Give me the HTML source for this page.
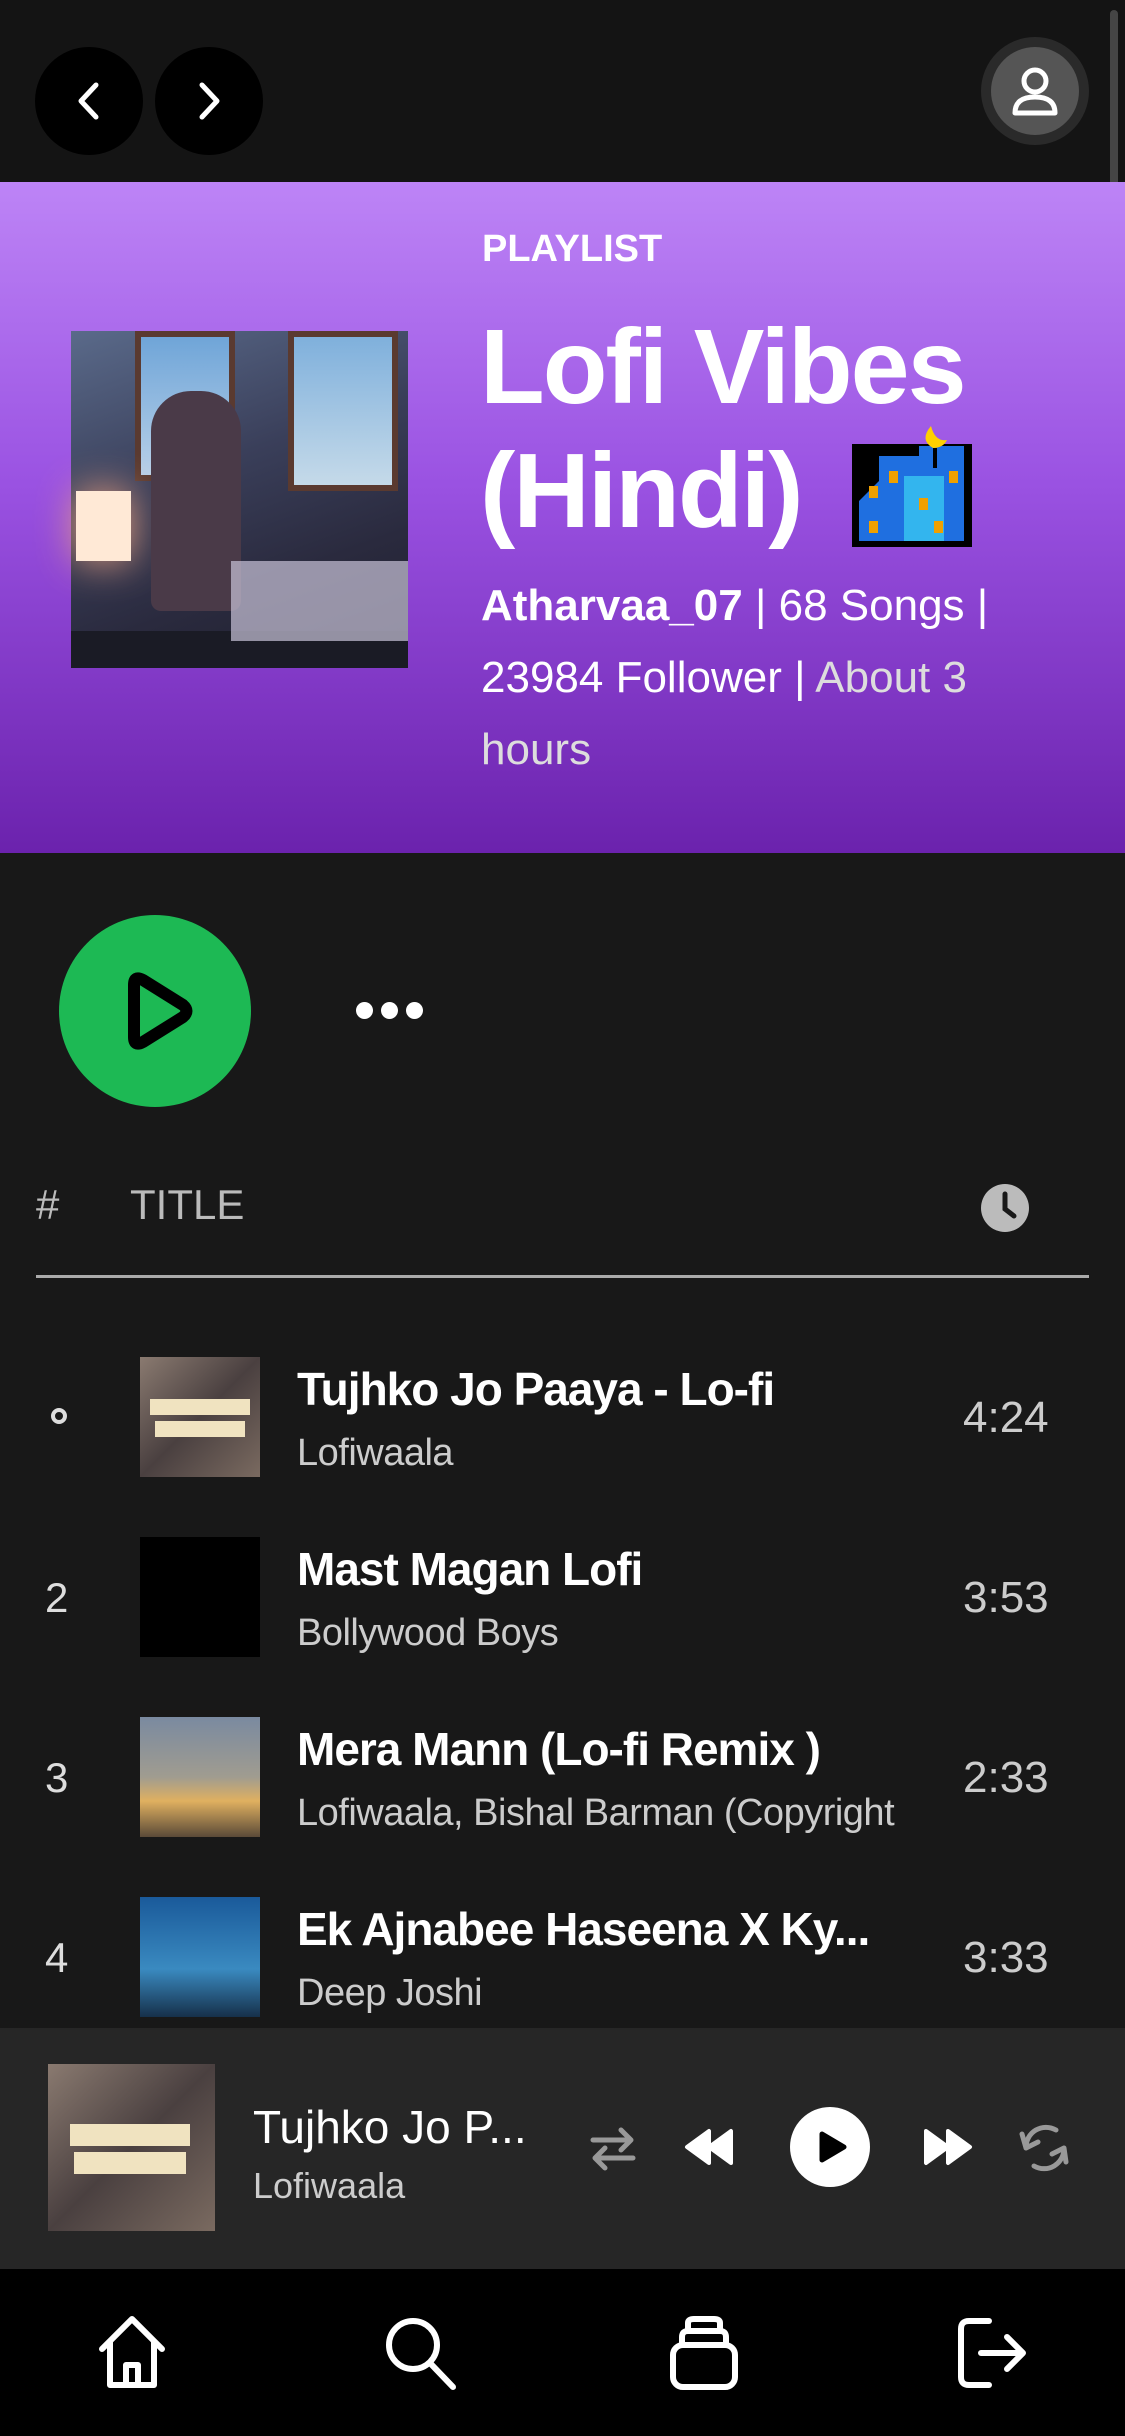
<!DOCTYPE html>
<html><head><meta charset="utf-8"><style>
*{margin:0;padding:0;box-sizing:border-box}
body{width:1125px;height:2436px;background:#181818;font-family:"Liberation Sans",sans-serif;color:#fff;position:relative;overflow:hidden}
.abs{position:absolute}
.top{left:0;top:0;width:1125px;height:182px;background:#141414}
.nb{width:108px;height:108px;border-radius:50%;background:#000;top:47px}
.hdr{left:0;top:182px;width:1125px;height:671px;background:linear-gradient(#bd84f6,#9a52e2 45%,#6b22ad)}
.t{white-space:nowrap}
.ttl{left:297px;font-size:46px;font-weight:bold;letter-spacing:-1px}
.art{left:297px;font-size:38px;color:#ccc;letter-spacing:-0.5px}
.dur{left:963px;font-size:44px;color:#ccc}
.th{left:140px;width:120px;height:120px}
</style></head><body>
<div class="abs top"></div>
<div class="abs nb" style="left:35px"></div>
<div class="abs nb" style="left:155px"></div>
<svg class="abs" style="left:35px;top:47px" width="108" height="108"><path d="M61 38 L46 54 L61 70" stroke="#fff" stroke-width="5" fill="none" stroke-linecap="round" stroke-linejoin="round"/></svg>
<svg class="abs" style="left:155px;top:47px" width="108" height="108"><path d="M47 38 L62 54 L47 70" stroke="#fff" stroke-width="5" fill="none" stroke-linecap="round" stroke-linejoin="round"/></svg>
<div class="abs" style="left:981px;top:37px;width:108px;height:108px;border-radius:50%;background:#2a2a2a"></div>
<div class="abs" style="left:991px;top:47px;width:88px;height:88px;border-radius:50%;background:#555"></div>
<svg class="abs" style="left:991px;top:47px" width="88" height="88"><circle cx="44" cy="34" r="11" stroke="#fff" stroke-width="5" fill="none"/><path d="M24 66 Q24 50 44 50 Q64 50 64 66 Z" stroke="#fff" stroke-width="5" fill="none" stroke-linejoin="round"/></svg>
<div class="abs" style="left:1110px;top:10px;width:8px;height:350px;background:#666;border-radius:4px;opacity:.6"></div>

<div class="abs hdr"></div>
<div class="abs" style="left:71px;top:331px;width:337px;height:337px;background:linear-gradient(160deg,#5a6a8a 0%,#3a3f5a 40%,#2a2a3e 70%,#1d1e2c 100%)">
 <div class="abs" style="left:64px;top:0;width:100px;height:150px;background:linear-gradient(#6fa5d8,#b8d0e8);border:6px solid #5a3a30"></div>
 <div class="abs" style="left:217px;top:0;width:110px;height:160px;background:linear-gradient(#7fb0dc,#c5dae9);border:6px solid #5a3a30"></div>
 <div class="abs" style="left:5px;top:160px;width:55px;height:70px;background:#ffe9d6;box-shadow:0 0 40px #e8a080"></div>
 <div class="abs" style="left:0;top:300px;width:337px;height:37px;background:#1a1b25"></div>
 <div class="abs" style="left:80px;top:60px;width:90px;height:220px;background:#4a3a48;border-radius:40px 40px 10px 10px"></div>
 <div class="abs" style="left:160px;top:230px;width:177px;height:80px;background:#c9c3d8;opacity:.7"></div>
</div>
<div class="abs t" style="left:482px;top:228px;font-size:38px;font-weight:bold">PLAYLIST</div>
<div class="abs" style="left:480px;top:305px;font-size:106px;font-weight:bold;line-height:124px;letter-spacing:-2px">Lofi Vibes<br>(Hindi)</div>
<svg class="abs" style="left:849px;top:426px" width="126" height="124"><rect x="3" y="18" width="120" height="103" fill="#000"/><path d="M10 115 V75 L30 55 V30 H70 V20 H115 V115 Z" fill="#1f6fe0"/><rect x="55" y="50" width="40" height="65" fill="#33b5ee"/><g fill="#f0a000"><rect x="20" y="60" width="9" height="12"/><rect x="40" y="45" width="9" height="12"/><rect x="70" y="72" width="9" height="12"/><rect x="100" y="45" width="9" height="12"/><rect x="20" y="95" width="9" height="12"/><rect x="85" y="95" width="9" height="12"/></g><path d="M82 0 Q70 14 84 22 Q94 22 98 14 Q86 16 82 0Z" fill="#ffd000"/><rect x="84" y="22" width="4" height="20" fill="#000"/></svg>
<div class="abs t" style="left:481px;top:570px;font-size:44px;line-height:72px"><b>Atharvaa_07</b> | 68 Songs |<br>23984 Follower | <span style="color:#ddd">About 3</span><br><span style="color:#ddd">hours</span></div>

<div class="abs" style="left:59px;top:915px;width:192px;height:192px;border-radius:50%;background:#1db954"></div>
<svg class="abs" style="left:59px;top:915px" width="192" height="192"><path d="M75 70 L75 122 Q75 132 84 127 L124 102 Q131 96 124 90 L84 65 Q75 60 75 70Z" fill="none" stroke="#000" stroke-width="12" stroke-linejoin="round"/></svg>
<div class="abs" style="left:356px;top:1002px;width:17px;height:17px;border-radius:50%;background:#fff"></div>
<div class="abs" style="left:381px;top:1002px;width:17px;height:17px;border-radius:50%;background:#fff"></div>
<div class="abs" style="left:406px;top:1002px;width:17px;height:17px;border-radius:50%;background:#fff"></div>

<div class="abs t" style="left:36px;top:1181px;font-size:42px;color:#bbb">#</div>
<div class="abs t" style="left:130px;top:1181px;font-size:42px;color:#bbb">TITLE</div>
<svg class="abs" style="left:980px;top:1183px" width="50" height="50"><circle cx="25" cy="25" r="24" fill="#bbb"/><path d="M25 11 V26 L34 33" stroke="#181818" stroke-width="5" fill="none" stroke-linecap="round"/></svg>
<div class="abs" style="left:36px;top:1275px;width:1053px;height:3px;background:#aaa"></div>

<div class="abs" style="left:51px;top:1408px;width:16px;height:16px;border-radius:50%;border:4px solid #ddd"></div>
<div class="abs th" style="top:1357px;background:linear-gradient(135deg,#8a7a70,#4a4040 50%,#7a6a60)"><div class="abs" style="left:10px;top:42px;width:100px;height:16px;background:#f0e3c0"></div><div class="abs" style="left:15px;top:64px;width:90px;height:16px;background:#f0e3c0"></div></div>
<div class="abs t ttl" style="top:1362px">Tujhko Jo Paaya - Lo-fi</div>
<div class="abs t art" style="top:1432px">Lofiwaala</div>
<div class="abs t dur" style="top:1393px">4:24</div>

<div class="abs t" style="left:45px;top:1574px;font-size:42px;color:#ddd">2</div>
<div class="abs th" style="top:1537px;background:#000"></div>
<div class="abs t ttl" style="top:1542px">Mast Magan Lofi</div>
<div class="abs t art" style="top:1612px">Bollywood Boys</div>
<div class="abs t dur" style="top:1573px">3:53</div>

<div class="abs t" style="left:45px;top:1754px;font-size:42px;color:#ddd">3</div>
<div class="abs th" style="top:1717px;background:linear-gradient(#7a8aa0,#a09c90 50%,#e0b060 70%,#5a4a38)"></div>
<div class="abs t ttl" style="top:1722px">Mera Mann (Lo-fi Remix )</div>
<div class="abs t art" style="top:1792px;width:600px;overflow:hidden">Lofiwaala, Bishal Barman (Copyright Free)</div>
<div class="abs t dur" style="top:1753px">2:33</div>

<div class="abs t" style="left:45px;top:1934px;font-size:42px;color:#ddd">4</div>
<div class="abs th" style="top:1897px;height:120px;background:linear-gradient(#1a5a9a,#3a8ac0 60%,#16304a)"></div>
<div class="abs t ttl" style="top:1902px">Ek Ajnabee Haseena X Ky...</div>
<div class="abs t art" style="top:1972px">Deep Joshi</div>
<div class="abs t dur" style="top:1933px">3:33</div>

<div class="abs" style="left:0;top:2028px;width:1125px;height:241px;background:#262626"></div>
<div class="abs" style="left:48px;top:2064px;width:167px;height:167px;background:linear-gradient(135deg,#8a7a70,#4a4040 50%,#7a6a60)"><div class="abs" style="left:22px;top:60px;width:120px;height:22px;background:#f0e3c0"></div><div class="abs" style="left:26px;top:88px;width:112px;height:22px;background:#f0e3c0"></div></div>
<div class="abs t" style="left:253px;top:2100px;font-size:46px">Tujhko Jo P...</div>
<div class="abs t" style="left:253px;top:2165px;font-size:36px;color:#ccc">Lofiwaala</div>
<svg class="abs" style="left:585px;top:2120px" width="56" height="56"><path d="M8 20 H46 M36 10 L46 20 L36 30 M48 38 H10 M20 28 L10 38 L20 48" stroke="#999" stroke-width="5" fill="none" stroke-linecap="round" stroke-linejoin="round"/></svg>
<svg class="abs" style="left:683px;top:2125px" width="54" height="44"><path d="M4 22 L26 6 V38 Z M26 22 L48 6 V38 Z" fill="#fff" stroke="#fff" stroke-width="4" stroke-linejoin="round"/></svg>
<div class="abs" style="left:790px;top:2107px;width:80px;height:80px;border-radius:50%;background:#fff"></div>
<svg class="abs" style="left:790px;top:2107px" width="80" height="80"><path d="M32 27 V53 L54 40Z" fill="#000" stroke="#000" stroke-width="5" stroke-linejoin="round"/></svg>
<svg class="abs" style="left:920px;top:2125px" width="54" height="44"><path d="M6 6 L28 22 L6 38 Z M28 6 L50 22 L28 38 Z" fill="#fff" stroke="#fff" stroke-width="4" stroke-linejoin="round"/></svg>
<svg class="abs" style="left:1018px;top:2120px" width="54" height="56"><path d="M38 10 A20 20 0 0 0 8 28 M16 46 A20 20 0 0 0 46 28 M4 14 L8 28 L20 22 M48 42 L46 28 L34 34" stroke="#999" stroke-width="5" fill="none" stroke-linecap="round" stroke-linejoin="round"/></svg>

<div class="abs" style="left:0;top:2269px;width:1125px;height:167px;background:#000"></div>
<svg class="abs" style="left:96px;top:2315px" width="72" height="76"><path d="M6 34 L36 4 L66 34 M14 26 V70 H58 V26 M30 70 V50 H42 V70" stroke="#fff" stroke-width="6" fill="none" stroke-linejoin="round" stroke-linecap="round"/></svg>
<svg class="abs" style="left:383px;top:2315px" width="76" height="76"><circle cx="30" cy="30" r="24" stroke="#fff" stroke-width="6" fill="none"/><path d="M47 48 L70 72" stroke="#fff" stroke-width="6" stroke-linecap="round"/></svg>
<svg class="abs" style="left:668px;top:2315px" width="72" height="76"><rect x="5" y="30" width="62" height="42" rx="10" stroke="#fff" stroke-width="6" fill="none"/><path d="M14 30 V22 Q14 16 20 16 H52 Q58 16 58 22 V30 M20 16 V8 Q20 4 26 4 H46 Q52 4 52 8 V16" stroke="#fff" stroke-width="6" fill="none"/></svg>
<svg class="abs" style="left:955px;top:2315px" width="76" height="76"><path d="M34 6 H14 Q6 6 6 14 V62 Q6 70 14 70 H34 M26 38 H68 M52 22 L68 38 L52 54" stroke="#fff" stroke-width="6" fill="none" stroke-linecap="round" stroke-linejoin="round"/></svg>
</body></html>
